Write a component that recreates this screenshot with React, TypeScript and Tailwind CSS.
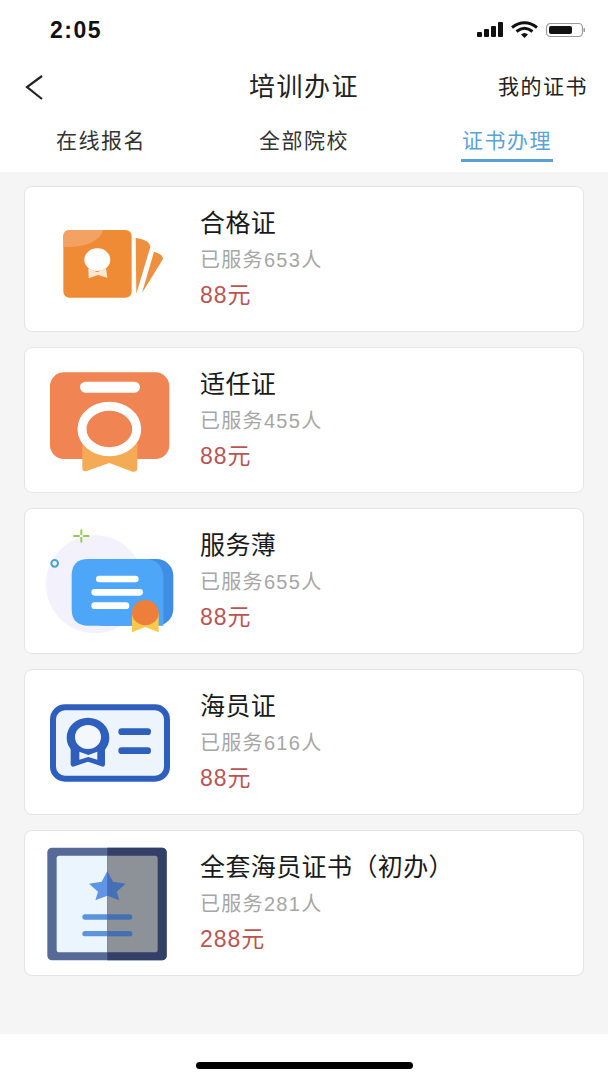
const FONT = { fontFamily: '"Liberation Sans", "Noto Sans CJK SC", sans-serif' }

// ── Certificate icons ──────────────────────────────────────────────────────
// Drawn in 3x units, each viewBox is the left 175x146 of its card.

function HegeIcon() {
  return (
    <svg width="175" height="146" viewBox="15 3 525 438" className="shrink-0">
      <rect x="130" y="135" width="205" height="203" rx="18" fill="#f08b35" />
      <path d="M130 153 a18 18 0 0 1 18 -18 H250 Q232 188 130 186 Z" fill="#f3a264" />
      <ellipse cx="232" cy="224" rx="39" ry="34" fill="#fff" />
      <path d="M205 250 L232 262 L258 250 L262 278 L234 270 L206 280 Z" fill="#fbe7d2" />
      <path d="M347 158 Q390 165 391 186 L349 326 Z" fill="#ef9040" />
      <path d="M402 200 Q430 208 429 222 L366 324 Z" fill="#ef9040" />
    </svg>
  )
}

function ShirenIcon() {
  return (
    <svg width="175" height="146" viewBox="15 6 525 438" className="shrink-0">
      <rect x="90" y="82" width="358" height="260" rx="42" fill="#f18453" />
      <rect x="180" y="110" width="180" height="33" rx="16" fill="#fff" />
      <path d="M187 290 V370 Q188 382 200 378 L268 354 L338 380 Q352 382 352 370 V290 Z" fill="#f5aa55" />
      <ellipse cx="268" cy="252" rx="82" ry="68" fill="#f18453" stroke="#fff" strokeWidth="27" />
    </svg>
  )
}

function FuwuIcon() {
  return (
    <svg width="175" height="146" viewBox="15 9 525 438" className="shrink-0">
      <circle cx="225" cy="238" r="147" fill="#f3f2fc" />
      <path d="M184 76 V88 M184 98 V110 M162 93 H177 M191 93 H206" stroke="#9ac75a" strokeWidth="6" strokeLinecap="round" />
      <circle cx="104" cy="175" r="10" fill="none" stroke="#4aa3c9" strokeWidth="6" />
      <rect x="200" y="162" width="260" height="200" rx="50" fill="#3f8ee6" />
      <path d="M205 162 H385 Q430 170 430 220 V362 H205 Q155 362 155 312 V212 Q155 162 205 162 Z" fill="#4da6f7" />
      <rect x="228" y="212" width="128" height="20" rx="10" fill="#fff" />
      <rect x="214" y="252" width="155" height="20" rx="10" fill="#fff" />
      <rect x="214" y="292" width="114" height="20" rx="10" fill="#fff" />
      <path d="M336 325 H416 V382 L376 366 L336 382 Z" fill="#f8c84f" />
      <ellipse cx="376" cy="323" rx="40" ry="38" fill="#ee7f3a" />
    </svg>
  )
}

function HaiyuanIcon() {
  return (
    <svg width="175" height="146" viewBox="15 12 525 438" className="shrink-0">
      <rect x="99" y="127" width="342" height="214" rx="36" fill="#eef4fb" stroke="#2f5fbd" strokeWidth="18" />
      <path d="M152 250 V298 Q153 308 164 304 L204 290 L244 304 Q255 308 255 298 V250 Z" fill="#2f5fbd" />
      <ellipse cx="204" cy="218" rx="64" ry="60" fill="#2f5fbd" />
      <ellipse cx="204" cy="216" rx="39" ry="36" fill="#f4f7fb" />
      <path d="M178 260 L205 270 L232 260 V284 L205 276 L178 284 Z" fill="#eef4fb" />
      <rect x="295" y="190" width="98" height="20" rx="10" fill="#2f5fbd" />
      <rect x="295" y="247" width="98" height="20" rx="10" fill="#2f5fbd" />
    </svg>
  )
}

const STAR = "M262 138 L279 170 L317 176 L290 200 L298 226 L262 212 L226 226 L234 200 L207 176 L245 170 Z"

function QuantaoIcon() {
  return (
    <svg width="175" height="146" viewBox="15 15 525 438" className="shrink-0">
      <rect x="82" y="68" width="358" height="338" rx="14" fill="#566a98" />
      <rect x="110" y="92" width="303" height="290" rx="8" fill="#eaf5fe" />
      <path d={STAR} fill="#5f95e4" />
      <rect x="187" y="268" width="150" height="16" rx="8" fill="#5b93dc" />
      <rect x="187" y="318" width="150" height="16" rx="8" fill="#5b93dc" />
      <path d="M262 68 H426 a14 14 0 0 1 14 14 V392 a14 14 0 0 1 -14 14 H262 Z" fill="#333f66" />
      <path d="M262 92 H405 a8 8 0 0 1 8 8 V374 a8 8 0 0 1 -8 8 H262 Z" fill="#8d9198" />
      <path d="M262 138 L279 170 L317 176 L290 200 L298 226 L262 212 Z" fill="#4470b4" />
      <path d="M262 268 H329 a8 8 0 0 1 0 16 H262 Z" fill="#4470b0" />
      <path d="M262 318 H329 a8 8 0 0 1 0 16 H262 Z" fill="#4470b0" />
    </svg>
  )
}

const CERTS = [
  { name: "合格证", served: "已服务653人", price: "88元", Icon: HegeIcon },
  { name: "适任证", served: "已服务455人", price: "88元", Icon: ShirenIcon },
  { name: "服务薄", served: "已服务655人", price: "88元", Icon: FuwuIcon },
  { name: "海员证", served: "已服务616人", price: "88元", Icon: HaiyuanIcon },
  { name: "全套海员证书（初办）", served: "已服务281人", price: "288元", Icon: QuantaoIcon },
]

// ── Status bar ─────────────────────────────────────────────────────────────

function StatusIcons() {
  return (
    <svg width="108" height="18" viewBox="0 0 108 18">
      <rect x="0" y="11" width="5" height="5" rx="1" fill="#111" />
      <rect x="7" y="8" width="5" height="8" rx="1" fill="#111" />
      <rect x="14" y="5" width="5" height="11" rx="1" fill="#111" />
      <rect x="21" y="1" width="5" height="15" rx="1" fill="#111" />
      <path d="M35 6.5 Q47.5 -3 60 6.5" fill="none" stroke="#111" strokeWidth="3" />
      <path d="M39.5 10.5 Q47.5 4 55.5 10.5" fill="none" stroke="#111" strokeWidth="3" />
      <path d="M44 13.5 Q47.5 10.5 51 13.5 L47.5 17 Z" fill="#111" />
      <rect x="69.5" y="2.5" width="36" height="13" rx="4" fill="none" stroke="#999" strokeWidth="1.2" />
      <rect x="72" y="5" width="23" height="8" rx="2" fill="#111" />
      <rect x="106.5" y="7" width="1.5" height="4" rx="0.7" fill="#999" />
    </svg>
  )
}

export default function App() {
  return (
    <div className="w-[608px] h-[1080px] flex flex-col bg-white overflow-hidden" style={FONT}>
      <div className="h-[60px] shrink-0 flex items-start justify-between pl-[50px] pr-[23px] pt-[17px]">
        <span className="text-[23px] leading-[26px] font-bold tracking-[1.5px] text-[#111]">2:05</span>
        <div className="pt-[4px]">
          <StatusIcons />
        </div>
      </div>

      <div className="h-[54px] shrink-0 grid grid-cols-3 items-center">
        <div className="pl-[25px]">
          <svg width="18" height="26" viewBox="0 0 18 26" className="block">
            <path d="M17 2 L2 13 L17 25" fill="none" stroke="#222" strokeWidth="2.2" />
          </svg>
        </div>
        <h1 className="text-center text-[26px] leading-[32px] tracking-[1.5px] font-normal text-[#222] whitespace-nowrap">培训办证</h1>
        <div className="text-right pr-[20px] text-[21px] leading-[28px] tracking-[1.5px] text-[#222] whitespace-nowrap">我的证书</div>
      </div>

      <div className="h-[58px] shrink-0 flex justify-between px-[55px] pt-[13px] text-[21px] leading-[28px] tracking-[1.5px] text-[#333]">
        <span className="w-[92px] text-center whitespace-nowrap">在线报名</span>
        <span className="w-[92px] text-center whitespace-nowrap">全部院校</span>
        <div className="w-[92px] flex flex-col items-center">
          <span className="text-[#5ba3d3] whitespace-nowrap">证书办理</span>
          <div className="w-[92px] h-[3px] mt-[4px] bg-[#5a9fd4]" />
        </div>
      </div>

      <main className="flex-1 bg-[#f5f5f5] px-[24px] pt-[14px] flex flex-col gap-[15px]">
        {CERTS.map(({ name, served, price, Icon }) => (
          <div key={name} className="h-[146px] shrink-0 flex items-center bg-white border border-[#e4e4e4] rounded-[8px]">
            <Icon />
            <div className="flex flex-col">
              <span className="text-[25px] leading-[36px] tracking-[0.4px] text-[#1a1a1a] whitespace-nowrap">{name}</span>
              <span className="text-[20px] leading-[36px] tracking-[1.3px] pt-[1px] text-[#a6a6a6] whitespace-nowrap">{served}</span>
              <span className="text-[23px] leading-[36px] tracking-[1px] -mt-[1px] text-[#bb5450] whitespace-nowrap">{price}</span>
            </div>
          </div>
        ))}
      </main>

      <div className="h-[46px] shrink-0 flex justify-center pt-[28px]">
        <div className="w-[217px] h-[7px] rounded-full bg-black" />
      </div>
    </div>
  )
}
